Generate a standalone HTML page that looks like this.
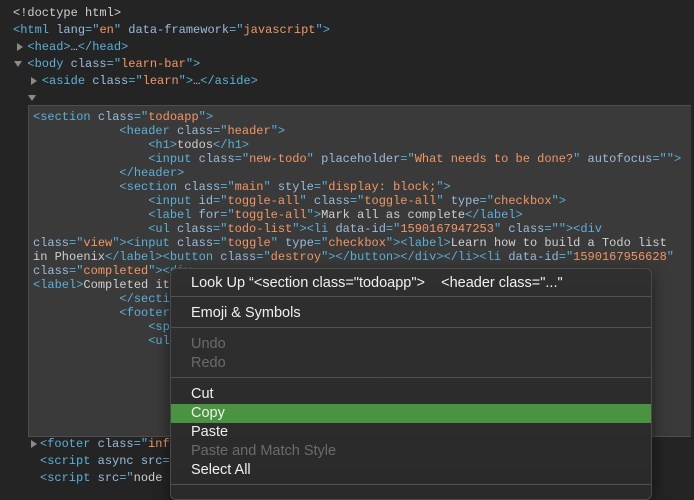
<!DOCTYPE html>
<html><head><style>
body{margin:0;width:694px;height:486px;background:#242424;overflow:hidden;position:relative;font-family:"Liberation Mono",monospace;font-size:12px}
.l{position:absolute;white-space:pre;color:#cfcfcf;line-height:14px}
.t{color:#5db0d7}.a{color:#9bbbdc}.v{color:#f29766}.x{color:#d4d4d4}
.tri{position:absolute;width:0;height:0}
.box{position:absolute;left:28px;top:105px;width:662px;height:330px;background:#3a3a3a;border:1px solid #4e4e4e;border-right:none}
.menu{position:absolute;left:170px;top:268px;width:480px;height:230px;background:linear-gradient(180deg,#2f2f2f,#2a2a2a);border:1px solid #4a4a4a;border-radius:6px;font-family:"Liberation Sans",sans-serif;font-size:14.5px;color:#f0f0f0;box-shadow:0 4px 16px rgba(0,0,0,.5)}
.mi{position:absolute;left:20px;line-height:19px;white-space:nowrap;margin-top:1px}
.dis{color:#6b6b6b}
.sep{position:absolute;left:0;right:0;height:1px;background:#525252}
.sel{position:absolute;left:0;right:0;top:135px;height:19px;background:#4a9340}
</style></head><body>
<div class="l" style="left:13px;top:5px;line-height:17px">&lt;!doctype html&gt;
<span class="t">&lt;html</span> <span class="a">lang</span><span class="t">="</span><span class="v">en</span><span class="t">"</span> <span class="a">data-framework</span><span class="t">="</span><span class="v">javascript</span><span class="t">"&gt;</span>
  <span class="t">&lt;head&gt;</span>…<span class="t">&lt;/head&gt;</span>
  <span class="t">&lt;body</span> <span class="a">class</span><span class="t">="</span><span class="v">learn-bar</span><span class="t">"&gt;</span>
    <span class="t">&lt;aside</span> <span class="a">class</span><span class="t">="</span><span class="v">learn</span><span class="t">"&gt;</span>…<span class="t">&lt;/aside&gt;</span></div>
<div class="tri" style="left:17px;top:43px;border-left:6px solid #8a8a8a;border-top:4px solid transparent;border-bottom:4px solid transparent"></div>
<div class="tri" style="left:14px;top:61px;border-top:6px solid #8a8a8a;border-left:4px solid transparent;border-right:4px solid transparent"></div>
<div class="tri" style="left:31px;top:77px;border-left:6px solid #8a8a8a;border-top:4px solid transparent;border-bottom:4px solid transparent"></div>
<div class="tri" style="left:28px;top:95px;border-top:6px solid #8a8a8a;border-left:4px solid transparent;border-right:4px solid transparent"></div>
<div class="box"></div>
<div class="l" style="left:33px;top:110px"><span class="t">&lt;section</span> <span class="a">class</span><span class="t">="</span><span class="v">todoapp</span><span class="t">"&gt;</span>
            <span class="t">&lt;header</span> <span class="a">class</span><span class="t">="</span><span class="v">header</span><span class="t">"&gt;</span>
                <span class="t">&lt;h1&gt;</span>todos<span class="t">&lt;/h1&gt;</span>
                <span class="t">&lt;input</span> <span class="a">class</span><span class="t">="</span><span class="v">new-todo</span><span class="t">"</span> <span class="a">placeholder</span><span class="t">="</span><span class="v">What needs to be done?</span><span class="t">"</span> <span class="a">autofocus</span><span class="t">=""&gt;</span>
            <span class="t">&lt;/header&gt;</span>
            <span class="t">&lt;section</span> <span class="a">class</span><span class="t">="</span><span class="v">main</span><span class="t">"</span> <span class="a">style</span><span class="t">="</span><span class="v">display: block;</span><span class="t">"&gt;</span>
                <span class="t">&lt;input</span> <span class="a">id</span><span class="t">="</span><span class="v">toggle-all</span><span class="t">"</span> <span class="a">class</span><span class="t">="</span><span class="v">toggle-all</span><span class="t">"</span> <span class="a">type</span><span class="t">="</span><span class="v">checkbox</span><span class="t">"&gt;</span>
                <span class="t">&lt;label</span> <span class="a">for</span><span class="t">="</span><span class="v">toggle-all</span><span class="t">"&gt;</span>Mark all as complete<span class="t">&lt;/label&gt;</span>
                <span class="t">&lt;ul</span> <span class="a">class</span><span class="t">="</span><span class="v">todo-list</span><span class="t">"&gt;&lt;li</span> <span class="a">data-id</span><span class="t">="</span><span class="v">1590167947253</span><span class="t">"</span> <span class="a">class</span><span class="t">=""&gt;&lt;div</span>
<span class="a">class</span><span class="t">="</span><span class="v">view</span><span class="t">"&gt;&lt;input</span> <span class="a">class</span><span class="t">="</span><span class="v">toggle</span><span class="t">"</span> <span class="a">type</span><span class="t">="</span><span class="v">checkbox</span><span class="t">"&gt;&lt;label&gt;</span>Learn how to build a Todo list
in Phoenix<span class="t">&lt;/label&gt;&lt;button</span> <span class="a">class</span><span class="t">="</span><span class="v">destroy</span><span class="t">"&gt;&lt;/button&gt;&lt;/div&gt;&lt;/li&gt;&lt;li</span> <span class="a">data-id</span><span class="t">="</span><span class="v">1590167956628</span><span class="t">"</span>
<span class="a">class</span><span class="t">="</span><span class="v">completed</span><span class="t">"&gt;&lt;div</span>
<span class="t">&lt;label&gt;</span>Completed item
            <span class="t">&lt;/section&gt;</span>
            <span class="t">&lt;footer</span>
                <span class="t">&lt;span</span>
                <span class="t">&lt;ul</span></div>
<div class="l" style="left:40px;top:436px;line-height:17px"><span class="t">&lt;footer</span> <span class="a">class</span><span class="t">="</span><span class="v">info</span>
<span class="t">&lt;script</span> <span class="a">async</span> <span class="a">src</span><span class="t">="</span>
<span class="t">&lt;script</span> <span class="a">src</span><span class="t">="</span>node</div>
<div class="tri" style="left:31px;top:440px;border-left:6px solid #8a8a8a;border-top:4px solid transparent;border-bottom:4px solid transparent"></div>
<div class="menu">
<div class="mi" style="top:4px">Look Up “&lt;section class="todoapp"&gt;&nbsp;&nbsp;&nbsp;&nbsp;&lt;header class="..."</div>
<div class="sep" style="top:27px"></div>
<div class="mi" style="top:34px">Emoji &amp; Symbols</div>
<div class="sep" style="top:58px"></div>
<div class="mi dis" style="top:65px">Undo</div>
<div class="mi dis" style="top:84px">Redo</div>
<div class="sep" style="top:108px"></div>
<div class="mi" style="top:115px">Cut</div>
<div class="sel"></div>
<div class="mi" style="top:134px">Copy</div>
<div class="mi" style="top:153px">Paste</div>
<div class="mi dis" style="top:172px">Paste and Match Style</div>
<div class="mi" style="top:191px">Select All</div>
<div class="sep" style="top:215px"></div>
</div>
</body></html>
